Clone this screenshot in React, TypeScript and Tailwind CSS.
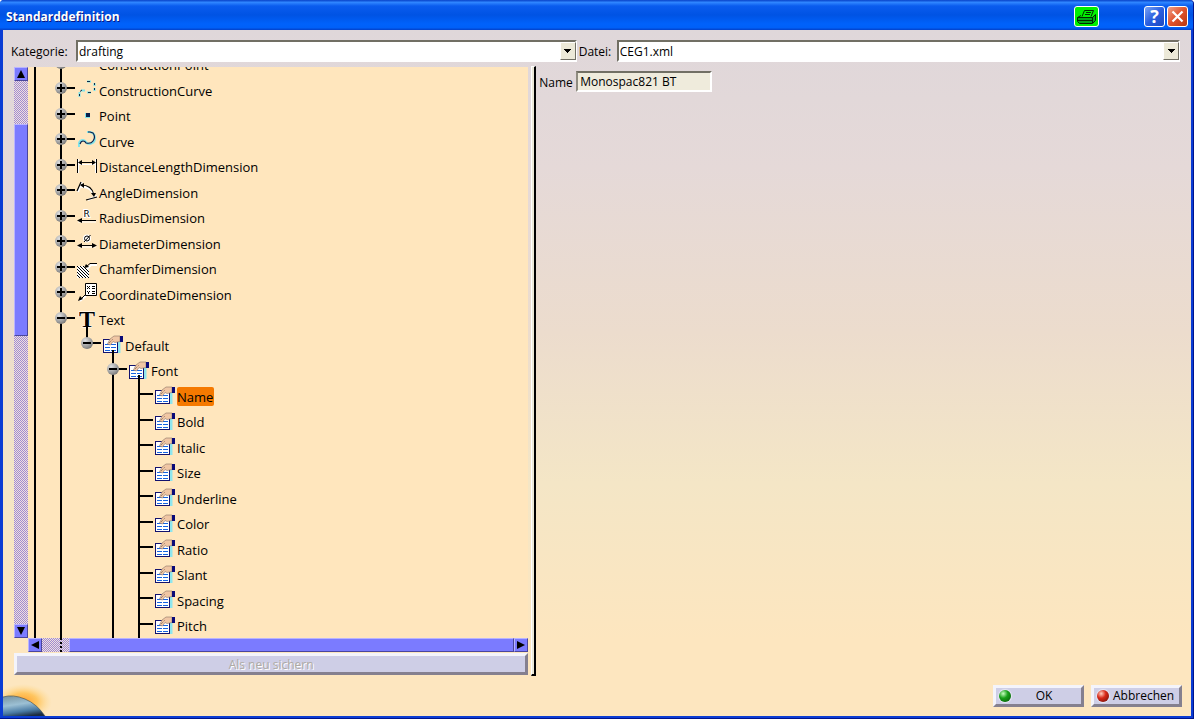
import type { ReactNode } from "react"

type Guide = "line" | "none"

type TreeRow = {
  label: string
  icon: ReactNode
  guides: Guide[]
  knob?: "plus" | "minus"
  last?: boolean
  opened?: boolean
  selected?: boolean
}

function Glyph({ children }: { children: ReactNode }) {
  return (
    <svg viewBox="0 0 22 20" className="h-5 w-[22px] shrink-0 overflow-visible" fill="none" aria-hidden="true">
      {children}
    </svg>
  )
}

function ConstructionCurveIcon() {
  return (
    <Glyph>
      <path d="M3.5 17V12M5 10.500H9M11 12.500H15M18.500 11V8M18.500 6V3M15 1.500H11" stroke="#7fe3ea" strokeWidth="2" />
      <path d="M3.5 16V14M4 11.500L6 10M12 12.500H15M18.500 10V8M18.500 5V3M14 1.500H11" stroke="#0b2a4a" />
    </Glyph>
  )
}

function CurveIcon() {
  return (
    <Glyph>
      <path d="M3 16V12Q4 9 7 9Q9 9 10 11Q11 13 14 13Q19 12 19 7Q19 2 14 1H11" stroke="#7fe3ea" strokeWidth="2" />
      <path d="M4 13Q5 10 7 10Q9 10 10 12Q15 13 17 10Q20 6 17 2L14 1H12" stroke="#0b1f4a" strokeWidth="1.2" />
    </Glyph>
  )
}

function PointIcon() {
  return (
    <Glyph>
      <path d="M9 7h5v5H9z" fill="#7fe3ea" />
      <path d="M10 7h4v4h-4z" fill="#08204c" />
    </Glyph>
  )
}

function DistanceIcon() {
  return (
    <Glyph>
      <path d="M2.5 2V16M19.5 2V16M3 7.5H19" stroke="#fff" />
      <path d="M1.5 2V16M20.5 2V16M3 5.5H19" stroke="#000" />
      <path d="M2 5.5L6 3V8zM20 5.5L16 3V8z" fill="#000" />
    </Glyph>
  )
}

function AngleIcon() {
  return (
    <Glyph>
      <path d="M6 0L2 10M5 5Q15 4 18 14M12 18L21 14" stroke="#fff" strokeWidth="2" />
      <path d="M5 0L1 9M5 3Q16 3 18 13M10 18L21 15" stroke="#000" strokeWidth="1.2" />
      <path d="M4 3L8 1V6zM18 15L15 11H20z" fill="#000" />
    </Glyph>
  )
}

function RadiusIcon() {
  return (
    <Glyph>
      <path d="M2 14H20" stroke="#fff" />
      <text x="7.5" y="9" fontSize="9" fontFamily="DejaVu Sans" fill="#000" stroke="#fff" strokeWidth="2" paintOrder="stroke">R</text>
      <path d="M2 12.5H20" stroke="#000" />
      <path d="M1 12.5L6 10V15z" fill="#000" />
    </Glyph>
  )
}

function DiameterIcon() {
  return (
    <Glyph>
      <circle cx="11" cy="5.5" r="4" fill="#fff" />
      <circle cx="11" cy="5.5" r="2.5" stroke="#000" />
      <path d="M8 9L14.500 2" stroke="#000" />
      <path d="M2 14H20" stroke="#fff" />
      <path d="M3 12.500H19" stroke="#000" />
      <path d="M1 12.500L6 10V15zM21 12.500L16 10V15z" fill="#000" />
    </Glyph>
  )
}

function ChamferIcon() {
  return (
    <Glyph>
      <path d="M1 7H8L13 11V19H1z" fill="#fff" />
      <path d="M1 16L4 19M1 13L7 19M1 10L10 19M1 7L13 19M4 7L13 16M7 7L13 13" stroke="#000" />
      <path d="M21 6H15L11 10" stroke="#fff" strokeWidth="2" />
      <path d="M21 4.500H14L10 8" stroke="#000" />
      <path d="M8 9L10 5L13 8z" fill="#000" />
    </Glyph>
  )
}

function CoordinateIcon() {
  return (
    <Glyph>
      <path d="M10 12L4 17" stroke="#fff" strokeWidth="2" />
      <path d="M9.500 -.5H20.500V11.500H9.500z" fill="#fff" stroke="#000" />
      <path d="M11 2L14 5M14 2L11 5M16 2.500H19M16 4.500H19M11 7L12.500 8.500L14 7M12.500 8V10M16 7.500H19M16 9.500H19M9 11L4 16" stroke="#000" />
      <path d="M2 17L4 12L7 15z" fill="#000" />
    </Glyph>
  )
}

function TextIcon() {
  return (
    <Glyph>
      <text x="3" y="17" fontSize="24" fontWeight="700" fontFamily="Liberation Serif" fill="#000" stroke="#fff" strokeWidth="1" paintOrder="stroke">T</text>
    </Glyph>
  )
}

function PropertiesIcon() {
  return (
    <Glyph>
      <path d="M16 6h2.500v12H16z" fill="#8ee6ee" />
      <path d="M1 4h15v14H1z" fill="#12126e" />
      <path d="M2 5h13v12H2z" fill="#fff" />
      <path d="M3 9h5v1H3zM9 9h5v1H9zM3 12h5v1H3zM9 12h5v1H9zM3 15h5v1H3zM9 15h5v1H9z" fill="#1463e0" />
      <path d="M5.500 9L8 4L12 1H18V6.500L13 7.500L11 6.500L8.500 10z" fill="#f0c6a4" stroke="#8a7264" strokeWidth="0.600" />
      <path d="M7 8L11 4" stroke="#5b4a42" strokeWidth="0.800" strokeDasharray="1 1" />
      <path d="M18 1h3v6h-3z" fill="#0a0a78" />
    </Glyph>
  )
}

const L1: Guide[] = ["line", "line"]
const L4: Guide[] = ["line", "line", "none", "line", "line"]

const rows: TreeRow[] = [
  { label: "ConstructionPoint", icon: <PointIcon />, guides: L1, knob: "plus" },
  { label: "ConstructionCurve", icon: <ConstructionCurveIcon />, guides: L1, knob: "plus" },
  { label: "Point", icon: <PointIcon />, guides: L1, knob: "plus" },
  { label: "Curve", icon: <CurveIcon />, guides: L1, knob: "plus" },
  { label: "DistanceLengthDimension", icon: <DistanceIcon />, guides: L1, knob: "plus" },
  { label: "AngleDimension", icon: <AngleIcon />, guides: L1, knob: "plus" },
  { label: "RadiusDimension", icon: <RadiusIcon />, guides: L1, knob: "plus" },
  { label: "DiameterDimension", icon: <DiameterIcon />, guides: L1, knob: "plus" },
  { label: "ChamferDimension", icon: <ChamferIcon />, guides: L1, knob: "plus" },
  { label: "CoordinateDimension", icon: <CoordinateIcon />, guides: L1, knob: "plus" },
  { label: "Text", icon: <TextIcon />, guides: L1, knob: "minus", opened: true },
  { label: "Default", icon: <PropertiesIcon />, guides: ["line", "line", "line"], knob: "minus", last: true, opened: true },
  { label: "Font", icon: <PropertiesIcon />, guides: ["line", "line", "none", "line"], knob: "minus", opened: true },
  { label: "Name", icon: <PropertiesIcon />, guides: L4, selected: true },
  { label: "Bold", icon: <PropertiesIcon />, guides: L4 },
  { label: "Italic", icon: <PropertiesIcon />, guides: L4 },
  { label: "Size", icon: <PropertiesIcon />, guides: L4 },
  { label: "Underline", icon: <PropertiesIcon />, guides: L4 },
  { label: "Color", icon: <PropertiesIcon />, guides: L4 },
  { label: "Ratio", icon: <PropertiesIcon />, guides: L4 },
  { label: "Slant", icon: <PropertiesIcon />, guides: L4 },
  { label: "Spacing", icon: <PropertiesIcon />, guides: L4 },
  { label: "Pitch", icon: <PropertiesIcon />, guides: L4 },
]

function Knob({ kind }: { kind: "plus" | "minus" }) {
  return (
    <button
      type="button"
      aria-label={kind === "plus" ? "Aufklappen" : "Zuklappen"}
      className="absolute top-[5px] -left-[5px] h-3 w-3 rounded-full bg-[radial-gradient(circle_at_35%_30%,#e0e0e0,#9a9a9a_55%,#555)]"
    >
      <svg viewBox="0 0 12 12" className="h-3 w-3" aria-hidden="true">
        <path d="M2 5h8v2H2z" fill="#000" />
        {kind === "plus" && <path d="M5 2h2v8H5z" fill="#000" />}
      </svg>
    </button>
  )
}

function TreeItem({ row }: { row: TreeRow }) {
  const node = row.guides.length - 1
  return (
    <li className="flex shrink-0 odd:h-[25px] even:h-[26px]">
      {row.guides.map((g, i) => (
        <span key={i} className={i === node ? "relative flex w-4 shrink-0" : "relative flex w-[26px] shrink-0"}>
          {g === "line" && <span className={row.last && i === node ? "h-3 w-0.5 bg-black" : "w-0.5 bg-black"} />}
          {i === node && <span className="mt-[10px] h-0.5 w-[13px] bg-black" />}
          {i === node && row.knob && <Knob kind={row.knob} />}
        </span>
      ))}
      <span className="relative mr-px flex items-center">
        {row.icon}
        {row.opened && <span className="absolute bottom-0 left-[10px] h-2 w-0.5 bg-black" />}
      </span>
      <span
        className={
          row.selected
            ? "my-auto h-[19px] rounded-xs bg-[#f57900] pr-px text-[13px] leading-5"
            : "my-auto h-[19px] text-[13px] leading-5"
        }
      >
        {row.label}
      </span>
    </li>
  )
}

const track = "bg-[conic-gradient(#a08cd0_25%,#efe0e0_0_50%,#a08cd0_0_75%,#efe0e0_0)] bg-[length:2px_2px]"
const thumb = "border border-t-[#b9b4ff] border-r-[#4a469c] border-b-[#4a469c] border-l-[#b9b4ff] bg-[#7b7bff]"
const raised = "border-[3px] border-t-[#f4f4fb] border-r-[#85808f] border-b-[#85808f] border-l-[#f4f4fb] bg-[#cecee6]"

const arrows = {
  up: "M7 3L11 11H3z",
  down: "M7 11L3 3H11z",
  left: "M3 7L11 3V11z",
  right: "M11 7L3 11V3z",
}

function ScrollArrow({ dir, label }: { dir: keyof typeof arrows; label: string }) {
  return (
    <button type="button" aria-label={label} className={"h-[14px] w-[14px] shrink-0 " + thumb}>
      <svg viewBox="1 1 12 12" className="h-3 w-3" aria-hidden="true">
        <path d={arrows[dir]} fill="#000" />
      </svg>
    </button>
  )
}

function Combo({ id, value }: { id: string; value: string }) {
  return (
    <div className="relative h-full w-full">
      <select
        id={id}
        defaultValue={value}
        className="h-full w-full appearance-none border-2 border-t-[#716f64] border-r-white border-b-white border-l-[#716f64] bg-white pt-px pl-px text-xs leading-4 text-black"
      >
        <option>{value}</option>
      </select>
      <span className="pointer-events-none absolute top-0.5 right-px bottom-0.5 flex w-4 items-center justify-center border border-t-white border-r-[#716f64] border-b-[#716f64] border-l-white bg-[#ece9d8]">
        <svg viewBox="0 0 7 4" className="h-1 w-[7px]" shapeRendering="crispEdges" aria-hidden="true">
          <path d="M0 0H7L3.500 4z" fill="#000" />
        </svg>
      </span>
    </div>
  )
}

function Sphere({ color }: { color: "green" | "red" }) {
  return (
    <span
      className={
        color === "green"
          ? "h-3 w-3 rounded-full bg-[radial-gradient(circle_at_35%_30%,#c8ffc0,#18a018_40%,#045004)] shadow-[0_0_1px_1px_#e8e8f4]"
          : "h-3 w-3 rounded-full bg-[radial-gradient(circle_at_35%_30%,#ffd0c0,#d82818_40%,#601008)] shadow-[0_0_1px_1px_#e8e8f4]"
      }
    />
  )
}

function TitleBar() {
  return (
    <header className="flex h-[30px] items-center rounded-t-[4px] bg-[linear-gradient(#0842c8,#2f86ff_8%,#0a5cee_20%,#0053e4_50%,#0062fb_80%,#0060f8_92%,#0340c8)] pr-[5px] pl-[6px]">
      <h1 className="flex-1 pt-1 text-xs font-bold text-white [text-shadow:1px_1px_0_#0a1883]">Standarddefinition</h1>
      <button type="button" aria-label="Drucken" className="mt-0.5 mr-[45px] flex h-[21px] w-[25px] items-center justify-center rounded-[3px] border border-white bg-[#00f000]">
        <svg viewBox="0 0 23 19" className="h-[19px] w-[23px]" fill="none" stroke="#002800" aria-hidden="true">
          <path d="M7 9.500L9.500 3.500H18.500L16 9.500" fill="#00f000" />
          <path d="M11 5.500H16M10 7.500H15" />
          <path d="M2.500 10.500L6 8.500M2.500 10.500H17.500L20.500 7.500V13.500L17.500 16.500H4.500L2.500 14.500z" fill="#00a818" />
          <path d="M2 13.500H18M17.500 10V16" />
        </svg>
      </button>
      <button type="button" aria-label="Hilfe" className="mt-0.5 mr-0.5 h-[21px] w-[21px] rounded-[3px] border border-white bg-[linear-gradient(135deg,#7ba4f4,#2a5fe0_50%,#1c48c0)] text-center text-lg leading-[19px] font-bold text-white">
        ?
      </button>
      <button type="button" aria-label="Schließen" className="mt-0.5 flex h-[21px] w-[21px] items-center justify-center rounded-[3px] border border-white bg-[linear-gradient(135deg,#f0a088,#e0522c_50%,#b83810)]">
        <svg viewBox="0 0 19 19" className="h-[19px] w-[19px]" aria-hidden="true">
          <path d="M4.500 4.500L14.500 14.500M14.500 4.500L4.500 14.500" stroke="#fff" strokeWidth="2.200" />
        </svg>
      </button>
    </header>
  )
}

export default function App() {
  return (
    <div className="flex min-h-screen flex-col rounded-t-[4px] border-r border-b border-[#00148c] bg-[#0a3cd4] font-['Open_Sans','Noto_Sans',sans-serif] text-black">
      <TitleBar />
      <main className="mr-[2px] mb-[2px] ml-[3px] flex flex-1 flex-col bg-[linear-gradient(#dfd7da,#e5d9d8_20%,#ecdccd_44%,#f4e6c6_66%,#fde6bf_89%)]">
        <div className="flex h-8 items-center pt-[10px] pr-[11px] pl-2 text-xs">
          <label htmlFor="category" className="w-[65px] shrink-0 pt-px">Kategorie:</label>
          <div className="h-[22px] flex-[8]"><Combo id="category" value="drafting" /></div>
          <label htmlFor="file" className="w-10 shrink-0 pt-px pl-0.5">Datei:</label>
          <div className="h-[22px] flex-[9]"><Combo id="file" value="CEG1.xml" /></div>
        </div>

        <div className="flex flex-1 pt-1 pr-[9px] pl-[11px]">
          <section className="flex min-w-0 flex-4 flex-col pt-px">
            <div className="flex h-[571px]">
              <div className="flex w-[14px] shrink-0 flex-col">
                <ScrollArrow dir="up" label="Nach oben" />
                <div className={"flex flex-1 flex-col " + track}>
                  <div className="flex-[43]" />
                  <div className={"flex-[211] " + thumb} />
                  <div className="flex-[290]" />
                </div>
                <ScrollArrow dir="down" label="Nach unten" />
              </div>
              <ul className="flex flex-1 flex-col justify-end overflow-hidden bg-[#ffe6bd] pl-[6px]">
                {rows.map((row) => (
                  <TreeItem key={row.label} row={row} />
                ))}
              </ul>
            </div>
            <div className="ml-[14px] flex">
              <ScrollArrow dir="left" label="Nach links" />
              <div className={"flex flex-1 " + track}>
                <div className="ml-[18px] border-l-2 border-dotted border-black" />
                <div className={"ml-[7px] flex-1 " + thumb} />
              </div>
              <ScrollArrow dir="right" label="Nach rechts" />
            </div>
            <button type="button" disabled className={"mt-px h-[22px] text-xs leading-[18px] text-[#aeaaa4] [text-shadow:1px_1px_0_#fff] " + raised}>
              Als neu sichern
            </button>
          </section>

          <div className="ml-[3px] w-[5px] shrink-0 border-t border-r-2 border-b-2 border-l border-t-white border-r-black border-b-black border-l-white bg-[#ece9d8]" />

          <section className="flex min-w-0 flex-5 items-start pt-[5px] pl-[3px]">
            <label htmlFor="name" className="w-[37px] shrink-0 pt-1 text-xs leading-4">Name</label>
            <input
              id="name"
              readOnly
              defaultValue="Monospac821 BT"
              className="h-[21px] w-[136px] border-2 border-t-[#716f64] border-r-white border-b-white border-l-[#8f8c80] bg-[#efebdc] pl-0.5 text-xs leading-4"
            />
          </section>
        </div>

        <footer className="flex h-10 items-end justify-between pr-[9px]">
          <svg viewBox="0 0 50 32" className="h-8 w-[50px]" aria-hidden="true">
            <defs>
              <radialGradient id="glow">
                <stop offset="0" stopColor="#ff9c28" />
                <stop offset="0.500" stopColor="#ffc050" stopOpacity="0.850" />
                <stop offset="1" stopColor="#ffdc90" stopOpacity="0" />
              </radialGradient>
              <linearGradient id="planet" x1="0.300" y1="0" x2="0.600" y2="1">
                <stop offset="0" stopColor="#7d99a6" />
                <stop offset="0.400" stopColor="#9cc0d4" />
                <stop offset="0.750" stopColor="#4a7ba4" />
                <stop offset="1" stopColor="#1c2c40" />
              </linearGradient>
            </defs>
            <ellipse cx="20" cy="18" rx="29" ry="18" fill="url(#glow)" />
            <path d="M0 13Q10 10 22 15Q34 20 42 32H0z" fill="url(#planet)" />
            <path d="M0 13Q10 10 22 15Q34 20 42 32" stroke="#3b4a50" strokeOpacity="0.600" fill="none" />
          </svg>
          <div className="mb-[9px] flex gap-[7px] text-xs leading-[18px]">
            <button type="button" className={"flex h-[22px] w-[91px] items-center pl-[3px] " + raised}>
              <Sphere color="green" />
              <span className="flex-1 pr-[4px] text-center">OK</span>
            </button>
            <button type="button" className={"flex h-[22px] w-[91px] items-center pl-[3px] " + raised}>
              <Sphere color="red" />
              <span className="pl-1">Abbrechen</span>
            </button>
          </div>
        </footer>
      </main>
    </div>
  )
}
